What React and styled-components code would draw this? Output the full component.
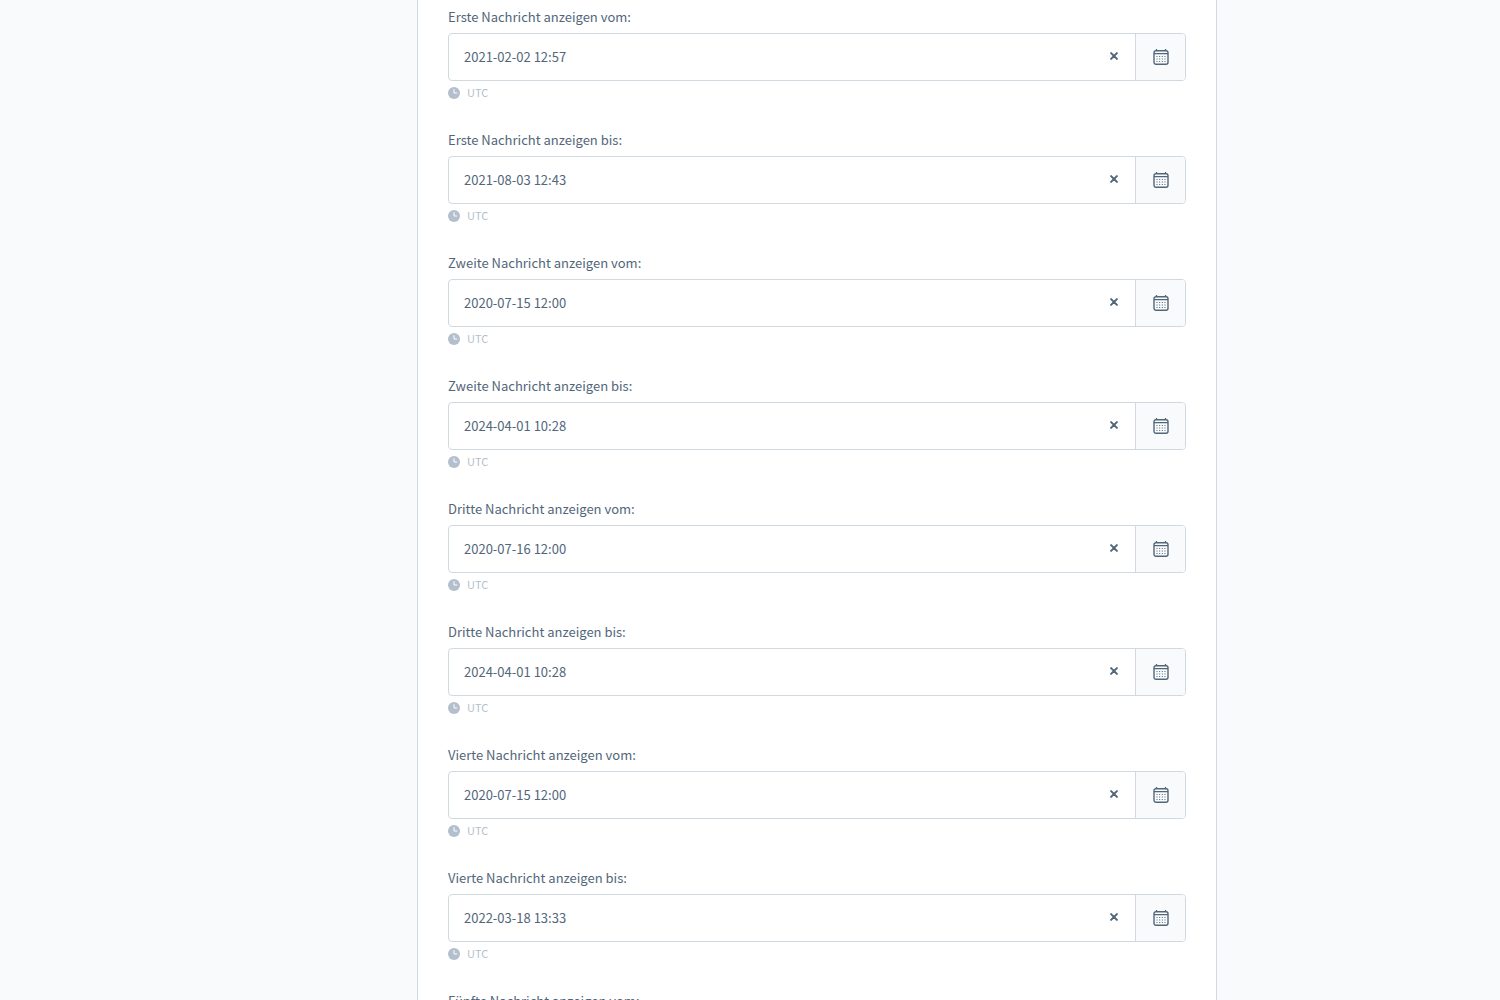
import React, { useState } from 'react';
import styled, { createGlobalStyle } from 'styled-components';

const GlobalStyle = createGlobalStyle`
  *, *::before, *::after { box-sizing: border-box; }
  body {
    margin: 0;
    background: #f9fafb;
    color: #52667a;
    font-family: "Source Sans Pro", "Noto Sans CJK SC", sans-serif;
    font-size: 13px;
  }
`;

const Page = styled.main`
  height: 100vh;
  overflow: hidden;
  padding-left: 134px;
`;

const Card = styled.form`
  display: flex;
  flex-direction: column;
  gap: 30px;
  max-width: 800px;
  min-height: 100%;
  margin: 0 auto;
  padding: 9px 30px;
  background: #fff;
  border: solid #d1d9e0;
  border-width: 0 1px;
`;

const Field = styled.div`
  display: flex;
  flex-direction: column;
`;

const Label = styled.label`
  align-self: flex-start;
  margin-bottom: 8px;
  line-height: 16px;
`;

const InputGroup = styled.div`
  display: flex;
  height: 48px;
  background: #fff;
  border: 1px solid #d1d9e0;
  border-radius: 4px;
  overflow: hidden;

  &:focus-within { border-color: #189eff; }
`;

const DateInput = styled.input`
  flex: 1;
  min-width: 0;
  padding: 0 15px 2px;
  border: 0;
  outline: 0;
  background: transparent;
  color: inherit;
  font: inherit;
`;

const IconButton = styled.button`
  display: flex;
  align-items: center;
  justify-content: center;
  padding: 0;
  border: 0;
  background: transparent;
  color: inherit;
  cursor: pointer;
`;

const ClearButton = styled(IconButton)`
  width: 42px;
  padding-bottom: 2px;
`;

const CalendarButton = styled(IconButton)`
  width: 50px;
  border-left: 1px solid #d1d9e0;
  background: #f9fafb;
`;

const Hint = styled.div`
  display: flex;
  align-items: center;
  gap: 7px;
  margin-top: 3px;
  color: #b3bfcc;
  font-size: 11px;
  line-height: 16px;
`;

const HintText = styled.span`
  padding-bottom: 2px;
`;

const ClearIcon = () => (
  <svg width="8" height="8" viewBox="0 0 8 8" fill="none" stroke="currentColor" strokeWidth="2" strokeLinecap="round" aria-hidden="true">
    <path d="M1.1 1.1l5.8 5.8M6.9 1.1L1.1 6.9" />
  </svg>
);

const CalendarIcon = () => (
  <svg width="16" height="16" viewBox="0 0 16 16" fill="none" stroke="currentColor" aria-hidden="true">
    <rect x="1" y="1.7" width="14" height="13.6" rx="2" strokeWidth="1.4" />
    <path d="M1 4.6h14" strokeWidth="1.3" />
    <path d="M3.5 0v2M12.5 0v2" strokeWidth="1.3" />
    <path d="M3.5 7.5h9M3.5 10h9M3.5 12.5h9" strokeWidth="1" strokeDasharray="1 1.66" />
  </svg>
);

const ClockIcon = () => (
  <svg width="12" height="12" viewBox="0 0 12 12" aria-hidden="true">
    <circle cx="6" cy="6" r="6" fill="currentColor" />
    <path d="M6 2.6V6h2.9" fill="none" stroke="#fff" strokeWidth="1" strokeLinecap="round" strokeLinejoin="round" />
  </svg>
);

const fields = [
  { id: 'first-from', label: 'Erste Nachricht anzeigen vom:', date: '2021-02-02 12:57' },
  { id: 'first-to', label: 'Erste Nachricht anzeigen bis:', date: '2021-08-03 12:43' },
  { id: 'second-from', label: 'Zweite Nachricht anzeigen vom:', date: '2020-07-15 12:00' },
  { id: 'second-to', label: 'Zweite Nachricht anzeigen bis:', date: '2024-04-01 10:28' },
  { id: 'third-from', label: 'Dritte Nachricht anzeigen vom:', date: '2020-07-16 12:00' },
  { id: 'third-to', label: 'Dritte Nachricht anzeigen bis:', date: '2024-04-01 10:28' },
  { id: 'fourth-from', label: 'Vierte Nachricht anzeigen vom:', date: '2020-07-15 12:00' },
  { id: 'fourth-to', label: 'Vierte Nachricht anzeigen bis:', date: '2022-03-18 13:33' },
  { id: 'fifth-from', label: 'Fünfte Nachricht anzeigen vom:', date: '' },
];

function DateField({ id, label, date }) {
  const [value, setValue] = useState(date);
  return (
    <Field>
      <Label htmlFor={id}>{label}</Label>
      <InputGroup>
        <DateInput id={id} type="text" value={value} onChange={(e) => setValue(e.target.value)} />
        <ClearButton type="button" aria-label="Datum löschen" onClick={() => setValue('')}>
          <ClearIcon />
        </ClearButton>
        <CalendarButton type="button" aria-label="Kalender öffnen">
          <CalendarIcon />
        </CalendarButton>
      </InputGroup>
      <Hint>
        <ClockIcon />
        <HintText>UTC</HintText>
      </Hint>
    </Field>
  );
}

export default function App() {
  return (
    <>
      <GlobalStyle />
      <Page>
        <Card>
          {fields.map((field) => <DateField key={field.id} {...field} />)}
        </Card>
      </Page>
    </>
  );
}
